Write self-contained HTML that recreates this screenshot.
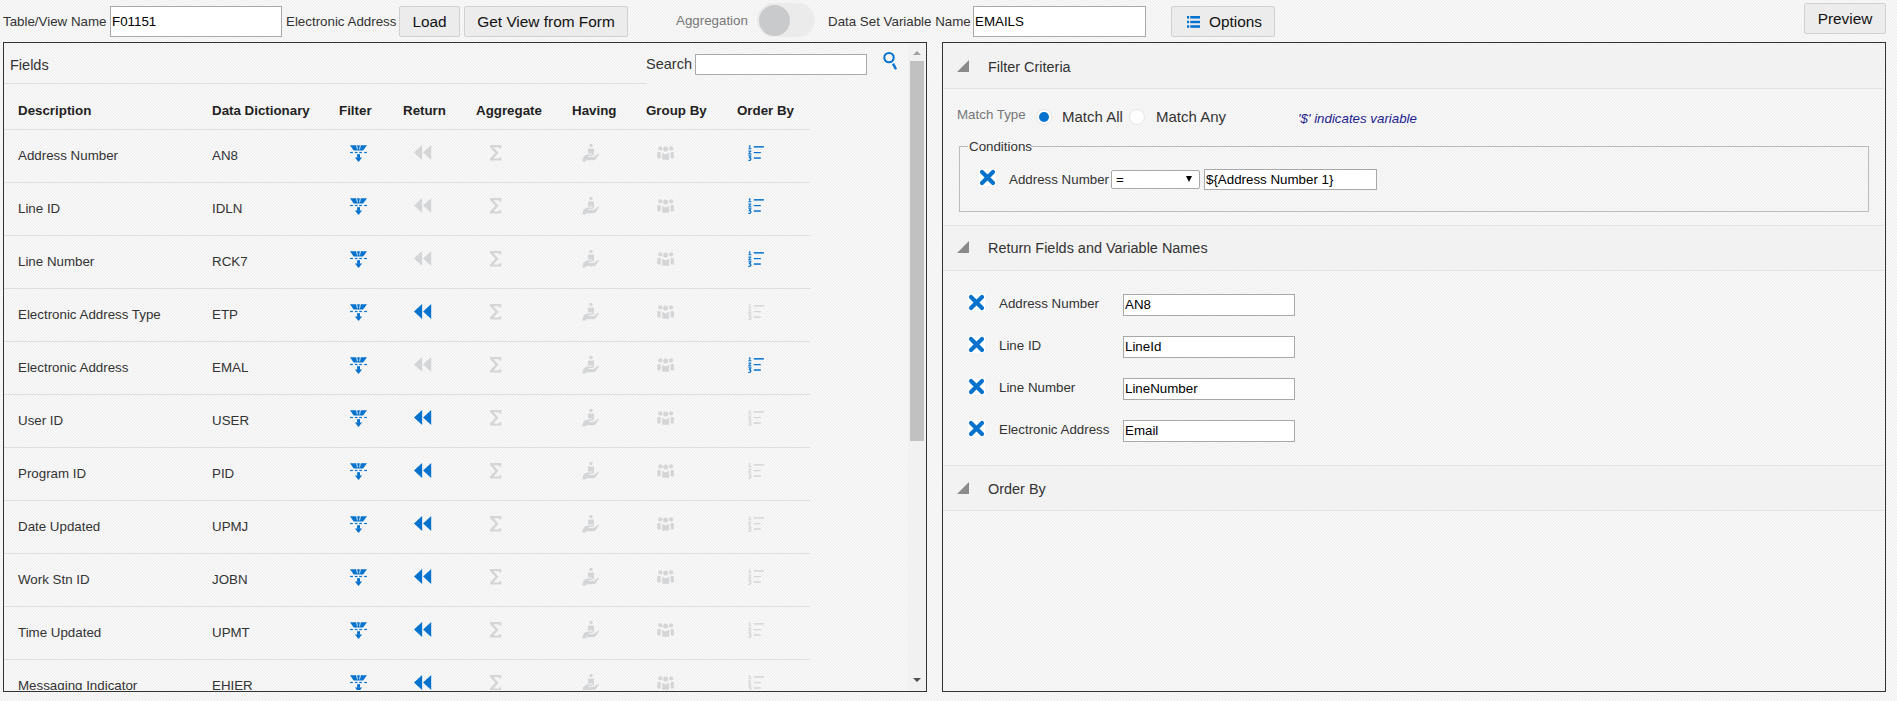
<!DOCTYPE html>
<html><head><meta charset="utf-8">
<style>
*{box-sizing:border-box;margin:0;padding:0}
html,body{width:1897px;height:701px;overflow:hidden}
body{position:relative;font-family:"Liberation Sans",sans-serif;color:#333;
 background:#f4f4f4;
 }
.a{position:absolute;white-space:nowrap}
.t13{font-size:13.33px;line-height:13px}
.t14{font-size:14px;line-height:14px}
.t15{font-size:15px;line-height:15px}
.inp{position:absolute;background:#fff;border:1px solid #a9a9a9}
.btn{position:absolute;background:#ececec;border:1px solid #d0d0d0;border-radius:2px;color:#111;font-size:15.4px;text-align:center}
.panel{position:absolute;border:1px solid #333}
.hline{position:absolute;height:1px;background:#dedede}
.hb{font-weight:bold;color:#222}
.sec{position:absolute;left:943px;width:941px;height:45px;background:#f2f2f2;border-top:1px solid #e3e3e3;border-bottom:1px solid #e3e3e3}
.tri{position:absolute;width:0;height:0;border-left:12px solid transparent;border-bottom:12px solid #8a8a8a}
</style></head><body>
<svg class="a" style="left:0;top:0" width="1897" height="701"><defs><pattern id="hp" width="3" height="3" patternUnits="userSpaceOnUse"><rect width="3" height="3" fill="#f8f8f8"/><rect x="0" y="0" width="1" height="1" fill="#eeeeee"/><rect x="1" y="1" width="1" height="1" fill="#eeeeee"/><rect x="2" y="2" width="1" height="1" fill="#eeeeee"/></pattern></defs><rect width="1897" height="701" fill="url(#hp)"/></svg>

<!-- top bar -->
<div class="a t13" style="left:3px;top:15px">Table/View Name</div>
<div class="inp" style="left:110px;top:6px;width:172px;height:31px"></div>
<div class="a t13" style="left:112px;top:15px;color:#000">F01151</div>
<div class="a t13" style="left:286px;top:15px">Electronic Address</div>
<div class="btn" style="left:399px;top:6px;width:61px;height:31px;line-height:29px">Load</div>
<div class="btn" style="left:464px;top:6px;width:164px;height:31px;line-height:29px">Get View from Form</div>
<div class="a t13" style="left:676px;top:14px;color:#777">Aggregation</div>
<div class="a" style="left:757px;top:3px;width:58px;height:34px;border-radius:17px;background:#ebebeb"></div>
<div class="a" style="left:759px;top:5px;width:31px;height:31px;border-radius:50%;background:#c9cacc"></div>
<div class="a t13" style="left:828px;top:15px">Data Set Variable Name</div>
<div class="inp" style="left:973px;top:6px;width:173px;height:31px"></div>
<div class="a t13" style="left:975px;top:15px;color:#000">EMAILS</div>
<div class="btn" style="left:1171px;top:6px;width:104px;height:31px;line-height:29px;text-align:left;padding-left:37px">Options</div>
<svg class="a" style="left:1187px;top:16px" width="14" height="12" viewBox="0 0 14 12"><g fill="#0572ce"><rect x="0" y="0" width="2.1" height="2.6"/><rect x="3.2" y="0" width="9.8" height="2.6"/><rect x="0" y="4.8" width="2.1" height="2.4"/><rect x="3.2" y="4.8" width="9.8" height="2.4"/><rect x="0" y="9.2" width="2.1" height="2.6"/><rect x="3.2" y="9.2" width="9.8" height="2.6"/></g></svg>
<div class="btn" style="left:1804px;top:3px;width:82px;height:31px;line-height:29px">Preview</div>

<!-- left panel -->
<div class="panel" style="left:3px;top:42px;width:924px;height:650px"></div>
<div class="a t14" style="left:10px;top:58px;font-size:14.5px">Fields</div>
<div class="a t14" style="left:646px;top:57px;font-size:14.5px">Search</div>
<div class="inp" style="left:695px;top:54px;width:172px;height:21px"></div>
<svg class="a" style="left:882px;top:51px" width="18" height="20" viewBox="0 0 18 20"><circle cx="7" cy="6.6" r="4.7" fill="none" stroke="#0572ce" stroke-width="2"/><line x1="11" y1="12.6" x2="14" y2="18.2" stroke="#0572ce" stroke-width="2.4"/></svg>
<div class="hline" style="left:4px;top:83px;width:642px"></div>

<div class="a t13 hb" style="left:18px;top:104px">Description</div>
<div class="a t13 hb" style="left:212px;top:104px">Data Dictionary</div>
<div class="a t13 hb" style="left:339px;top:104px">Filter</div>
<div class="a t13 hb" style="left:403px;top:104px">Return</div>
<div class="a t13 hb" style="left:476px;top:104px">Aggregate</div>
<div class="a t13 hb" style="left:572px;top:104px">Having</div>
<div class="a t13 hb" style="left:646px;top:104px">Group By</div>
<div class="a t13 hb" style="left:737px;top:104px">Order By</div>
<div class="a" style="left:4px;top:43px;width:904px;height:647px;overflow:hidden">
<div class="hline" style="left:0px;top:86px;width:806px"></div>
<div class="a t13" style="left:14px;top:106px">Address Number</div>
<div class="a t13" style="left:208px;top:106px">AN8</div>
<svg class="a" style="left:346px;top:102px" width="17" height="17" viewBox="0 0 17 17"><g fill="#0572ce"><path d="M0 0.2H17L13.1 5.6H3.7Z"/><path d="M6.6 0L7.4 4.4M10.4 0L9.6 4.4" stroke="#f4f4f4" stroke-width="0.9"/><rect x="0.1" y="6.9" width="2.8" height="1.2"/><rect x="4.9" y="6.9" width="2.6" height="1.2"/><rect x="9.2" y="6.9" width="2.7" height="1.2"/><rect x="14.2" y="6.9" width="2.7" height="1.2"/><rect x="7.1" y="9.2" width="2.9" height="3.6"/><path d="M4.9 12.4H12.1L8.5 17Z"/></g></svg>
<svg class="a" style="left:410px;top:102px" width="18" height="15" viewBox="0 0 18 15"><g fill="#d4d5d7"><path d="M0 7.4L8.1 0V14.9Z"/><path d="M9.1 7.4L17.2 0V14.9Z"/></g></svg>
<svg class="a" style="left:485.5px;top:102px" width="12" height="16" viewBox="0 0 12 16"><g fill="#d4d5d7"><path d="M0 0H11.3V3.4H9.2V2.2H3.4L8.5 7.8L3.4 13.4H9.2V12.2H11.3V15.6H0V13.6L5.4 7.8L0 2Z"/></g></svg>
<svg class="a" style="left:578px;top:101px" width="18" height="18" viewBox="0 0 18 18"><g fill="#d4d5d7"><circle cx="9" cy="1.6" r="1.7"/><path d="M6 4.4H8.5L9 5.2L9.5 4.4H12V11.6H10.5V9.6H7.5V9.4H6Z"/><path d="M0.3 17.6L1.2 13.6Q2.6 10.6 6 10.4H10.6V12.1H6.6V12.9H11.8L16.4 9.6L17 10.2L13.8 15Q12.8 16.2 11 16.2H4.3L3.4 17.6Z"/></g></svg>
<svg class="a" style="left:653px;top:103px" width="17" height="14" viewBox="0 0 17 14"><g fill="#d4d5d7"><circle cx="3.3" cy="2.4" r="2.1"/><circle cx="8.6" cy="2.9" r="2.5"/><circle cx="14.1" cy="2.4" r="2.1"/><rect x="0.3" y="6" width="3.4" height="6.5" rx="1"/><path d="M5.2 6.8L8.65 8.6L12.1 6.8V13.7H5.2Z"/><rect x="13.6" y="6" width="3.3" height="6.5" rx="1"/></g></svg>
<svg class="a" style="left:744px;top:102px" width="16" height="16" viewBox="0 0 16 16"><g fill="#0572ce"><path d="M1.2 0.3H2.4V3.2H3.4V4.3H0.4V3.2H1.3V1.4L0.6 1.8Z"/><path d="M0.4 5.6H3.2V6.8L1.6 8.3H3.4V9.4H0.3V8.2L2 6.7H0.4Z"/><path d="M0.4 10.2H3.4V11.2L2.4 12.3Q3.5 12.6 3.5 14Q3.4 15.9 1.6 15.9H0.3V14.8H1.6Q2.2 14.8 2.2 14Q2.2 13.2 1.4 13.2H0.8V12.2L1.7 11.3H0.4Z"/><rect x="5.8" y="1.1" width="10.1" height="1.5"/><rect x="5.8" y="7" width="7" height="1.2"/><rect x="5.8" y="12.3" width="7" height="1.5"/></g></svg>
<div class="hline" style="left:0px;top:139px;width:806px"></div>
<div class="a t13" style="left:14px;top:159px">Line ID</div>
<div class="a t13" style="left:208px;top:159px">IDLN</div>
<svg class="a" style="left:346px;top:155px" width="17" height="17" viewBox="0 0 17 17"><g fill="#0572ce"><path d="M0 0.2H17L13.1 5.6H3.7Z"/><path d="M6.6 0L7.4 4.4M10.4 0L9.6 4.4" stroke="#f4f4f4" stroke-width="0.9"/><rect x="0.1" y="6.9" width="2.8" height="1.2"/><rect x="4.9" y="6.9" width="2.6" height="1.2"/><rect x="9.2" y="6.9" width="2.7" height="1.2"/><rect x="14.2" y="6.9" width="2.7" height="1.2"/><rect x="7.1" y="9.2" width="2.9" height="3.6"/><path d="M4.9 12.4H12.1L8.5 17Z"/></g></svg>
<svg class="a" style="left:410px;top:155px" width="18" height="15" viewBox="0 0 18 15"><g fill="#d4d5d7"><path d="M0 7.4L8.1 0V14.9Z"/><path d="M9.1 7.4L17.2 0V14.9Z"/></g></svg>
<svg class="a" style="left:485.5px;top:155px" width="12" height="16" viewBox="0 0 12 16"><g fill="#d4d5d7"><path d="M0 0H11.3V3.4H9.2V2.2H3.4L8.5 7.8L3.4 13.4H9.2V12.2H11.3V15.6H0V13.6L5.4 7.8L0 2Z"/></g></svg>
<svg class="a" style="left:578px;top:154px" width="18" height="18" viewBox="0 0 18 18"><g fill="#d4d5d7"><circle cx="9" cy="1.6" r="1.7"/><path d="M6 4.4H8.5L9 5.2L9.5 4.4H12V11.6H10.5V9.6H7.5V9.4H6Z"/><path d="M0.3 17.6L1.2 13.6Q2.6 10.6 6 10.4H10.6V12.1H6.6V12.9H11.8L16.4 9.6L17 10.2L13.8 15Q12.8 16.2 11 16.2H4.3L3.4 17.6Z"/></g></svg>
<svg class="a" style="left:653px;top:156px" width="17" height="14" viewBox="0 0 17 14"><g fill="#d4d5d7"><circle cx="3.3" cy="2.4" r="2.1"/><circle cx="8.6" cy="2.9" r="2.5"/><circle cx="14.1" cy="2.4" r="2.1"/><rect x="0.3" y="6" width="3.4" height="6.5" rx="1"/><path d="M5.2 6.8L8.65 8.6L12.1 6.8V13.7H5.2Z"/><rect x="13.6" y="6" width="3.3" height="6.5" rx="1"/></g></svg>
<svg class="a" style="left:744px;top:155px" width="16" height="16" viewBox="0 0 16 16"><g fill="#0572ce"><path d="M1.2 0.3H2.4V3.2H3.4V4.3H0.4V3.2H1.3V1.4L0.6 1.8Z"/><path d="M0.4 5.6H3.2V6.8L1.6 8.3H3.4V9.4H0.3V8.2L2 6.7H0.4Z"/><path d="M0.4 10.2H3.4V11.2L2.4 12.3Q3.5 12.6 3.5 14Q3.4 15.9 1.6 15.9H0.3V14.8H1.6Q2.2 14.8 2.2 14Q2.2 13.2 1.4 13.2H0.8V12.2L1.7 11.3H0.4Z"/><rect x="5.8" y="1.1" width="10.1" height="1.5"/><rect x="5.8" y="7" width="7" height="1.2"/><rect x="5.8" y="12.3" width="7" height="1.5"/></g></svg>
<div class="hline" style="left:0px;top:192px;width:806px"></div>
<div class="a t13" style="left:14px;top:212px">Line Number</div>
<div class="a t13" style="left:208px;top:212px">RCK7</div>
<svg class="a" style="left:346px;top:208px" width="17" height="17" viewBox="0 0 17 17"><g fill="#0572ce"><path d="M0 0.2H17L13.1 5.6H3.7Z"/><path d="M6.6 0L7.4 4.4M10.4 0L9.6 4.4" stroke="#f4f4f4" stroke-width="0.9"/><rect x="0.1" y="6.9" width="2.8" height="1.2"/><rect x="4.9" y="6.9" width="2.6" height="1.2"/><rect x="9.2" y="6.9" width="2.7" height="1.2"/><rect x="14.2" y="6.9" width="2.7" height="1.2"/><rect x="7.1" y="9.2" width="2.9" height="3.6"/><path d="M4.9 12.4H12.1L8.5 17Z"/></g></svg>
<svg class="a" style="left:410px;top:208px" width="18" height="15" viewBox="0 0 18 15"><g fill="#d4d5d7"><path d="M0 7.4L8.1 0V14.9Z"/><path d="M9.1 7.4L17.2 0V14.9Z"/></g></svg>
<svg class="a" style="left:485.5px;top:208px" width="12" height="16" viewBox="0 0 12 16"><g fill="#d4d5d7"><path d="M0 0H11.3V3.4H9.2V2.2H3.4L8.5 7.8L3.4 13.4H9.2V12.2H11.3V15.6H0V13.6L5.4 7.8L0 2Z"/></g></svg>
<svg class="a" style="left:578px;top:207px" width="18" height="18" viewBox="0 0 18 18"><g fill="#d4d5d7"><circle cx="9" cy="1.6" r="1.7"/><path d="M6 4.4H8.5L9 5.2L9.5 4.4H12V11.6H10.5V9.6H7.5V9.4H6Z"/><path d="M0.3 17.6L1.2 13.6Q2.6 10.6 6 10.4H10.6V12.1H6.6V12.9H11.8L16.4 9.6L17 10.2L13.8 15Q12.8 16.2 11 16.2H4.3L3.4 17.6Z"/></g></svg>
<svg class="a" style="left:653px;top:209px" width="17" height="14" viewBox="0 0 17 14"><g fill="#d4d5d7"><circle cx="3.3" cy="2.4" r="2.1"/><circle cx="8.6" cy="2.9" r="2.5"/><circle cx="14.1" cy="2.4" r="2.1"/><rect x="0.3" y="6" width="3.4" height="6.5" rx="1"/><path d="M5.2 6.8L8.65 8.6L12.1 6.8V13.7H5.2Z"/><rect x="13.6" y="6" width="3.3" height="6.5" rx="1"/></g></svg>
<svg class="a" style="left:744px;top:208px" width="16" height="16" viewBox="0 0 16 16"><g fill="#0572ce"><path d="M1.2 0.3H2.4V3.2H3.4V4.3H0.4V3.2H1.3V1.4L0.6 1.8Z"/><path d="M0.4 5.6H3.2V6.8L1.6 8.3H3.4V9.4H0.3V8.2L2 6.7H0.4Z"/><path d="M0.4 10.2H3.4V11.2L2.4 12.3Q3.5 12.6 3.5 14Q3.4 15.9 1.6 15.9H0.3V14.8H1.6Q2.2 14.8 2.2 14Q2.2 13.2 1.4 13.2H0.8V12.2L1.7 11.3H0.4Z"/><rect x="5.8" y="1.1" width="10.1" height="1.5"/><rect x="5.8" y="7" width="7" height="1.2"/><rect x="5.8" y="12.3" width="7" height="1.5"/></g></svg>
<div class="hline" style="left:0px;top:245px;width:806px"></div>
<div class="a t13" style="left:14px;top:265px">Electronic Address Type</div>
<div class="a t13" style="left:208px;top:265px">ETP</div>
<svg class="a" style="left:346px;top:261px" width="17" height="17" viewBox="0 0 17 17"><g fill="#0572ce"><path d="M0 0.2H17L13.1 5.6H3.7Z"/><path d="M6.6 0L7.4 4.4M10.4 0L9.6 4.4" stroke="#f4f4f4" stroke-width="0.9"/><rect x="0.1" y="6.9" width="2.8" height="1.2"/><rect x="4.9" y="6.9" width="2.6" height="1.2"/><rect x="9.2" y="6.9" width="2.7" height="1.2"/><rect x="14.2" y="6.9" width="2.7" height="1.2"/><rect x="7.1" y="9.2" width="2.9" height="3.6"/><path d="M4.9 12.4H12.1L8.5 17Z"/></g></svg>
<svg class="a" style="left:410px;top:261px" width="18" height="15" viewBox="0 0 18 15"><g fill="#0572ce"><path d="M0 7.4L8.1 0V14.9Z"/><path d="M9.1 7.4L17.2 0V14.9Z"/></g></svg>
<svg class="a" style="left:485.5px;top:261px" width="12" height="16" viewBox="0 0 12 16"><g fill="#d4d5d7"><path d="M0 0H11.3V3.4H9.2V2.2H3.4L8.5 7.8L3.4 13.4H9.2V12.2H11.3V15.6H0V13.6L5.4 7.8L0 2Z"/></g></svg>
<svg class="a" style="left:578px;top:260px" width="18" height="18" viewBox="0 0 18 18"><g fill="#d4d5d7"><circle cx="9" cy="1.6" r="1.7"/><path d="M6 4.4H8.5L9 5.2L9.5 4.4H12V11.6H10.5V9.6H7.5V9.4H6Z"/><path d="M0.3 17.6L1.2 13.6Q2.6 10.6 6 10.4H10.6V12.1H6.6V12.9H11.8L16.4 9.6L17 10.2L13.8 15Q12.8 16.2 11 16.2H4.3L3.4 17.6Z"/></g></svg>
<svg class="a" style="left:653px;top:262px" width="17" height="14" viewBox="0 0 17 14"><g fill="#d4d5d7"><circle cx="3.3" cy="2.4" r="2.1"/><circle cx="8.6" cy="2.9" r="2.5"/><circle cx="14.1" cy="2.4" r="2.1"/><rect x="0.3" y="6" width="3.4" height="6.5" rx="1"/><path d="M5.2 6.8L8.65 8.6L12.1 6.8V13.7H5.2Z"/><rect x="13.6" y="6" width="3.3" height="6.5" rx="1"/></g></svg>
<svg class="a" style="left:744px;top:261px" width="16" height="16" viewBox="0 0 16 16"><g fill="#d4d5d7"><path d="M1.2 0.3H2.4V3.2H3.4V4.3H0.4V3.2H1.3V1.4L0.6 1.8Z"/><path d="M0.4 5.6H3.2V6.8L1.6 8.3H3.4V9.4H0.3V8.2L2 6.7H0.4Z"/><path d="M0.4 10.2H3.4V11.2L2.4 12.3Q3.5 12.6 3.5 14Q3.4 15.9 1.6 15.9H0.3V14.8H1.6Q2.2 14.8 2.2 14Q2.2 13.2 1.4 13.2H0.8V12.2L1.7 11.3H0.4Z"/><rect x="5.8" y="1.1" width="10.1" height="1.5"/><rect x="5.8" y="7" width="7" height="1.2"/><rect x="5.8" y="12.3" width="7" height="1.5"/></g></svg>
<div class="hline" style="left:0px;top:298px;width:806px"></div>
<div class="a t13" style="left:14px;top:318px">Electronic Address</div>
<div class="a t13" style="left:208px;top:318px">EMAL</div>
<svg class="a" style="left:346px;top:314px" width="17" height="17" viewBox="0 0 17 17"><g fill="#0572ce"><path d="M0 0.2H17L13.1 5.6H3.7Z"/><path d="M6.6 0L7.4 4.4M10.4 0L9.6 4.4" stroke="#f4f4f4" stroke-width="0.9"/><rect x="0.1" y="6.9" width="2.8" height="1.2"/><rect x="4.9" y="6.9" width="2.6" height="1.2"/><rect x="9.2" y="6.9" width="2.7" height="1.2"/><rect x="14.2" y="6.9" width="2.7" height="1.2"/><rect x="7.1" y="9.2" width="2.9" height="3.6"/><path d="M4.9 12.4H12.1L8.5 17Z"/></g></svg>
<svg class="a" style="left:410px;top:314px" width="18" height="15" viewBox="0 0 18 15"><g fill="#d4d5d7"><path d="M0 7.4L8.1 0V14.9Z"/><path d="M9.1 7.4L17.2 0V14.9Z"/></g></svg>
<svg class="a" style="left:485.5px;top:314px" width="12" height="16" viewBox="0 0 12 16"><g fill="#d4d5d7"><path d="M0 0H11.3V3.4H9.2V2.2H3.4L8.5 7.8L3.4 13.4H9.2V12.2H11.3V15.6H0V13.6L5.4 7.8L0 2Z"/></g></svg>
<svg class="a" style="left:578px;top:313px" width="18" height="18" viewBox="0 0 18 18"><g fill="#d4d5d7"><circle cx="9" cy="1.6" r="1.7"/><path d="M6 4.4H8.5L9 5.2L9.5 4.4H12V11.6H10.5V9.6H7.5V9.4H6Z"/><path d="M0.3 17.6L1.2 13.6Q2.6 10.6 6 10.4H10.6V12.1H6.6V12.9H11.8L16.4 9.6L17 10.2L13.8 15Q12.8 16.2 11 16.2H4.3L3.4 17.6Z"/></g></svg>
<svg class="a" style="left:653px;top:315px" width="17" height="14" viewBox="0 0 17 14"><g fill="#d4d5d7"><circle cx="3.3" cy="2.4" r="2.1"/><circle cx="8.6" cy="2.9" r="2.5"/><circle cx="14.1" cy="2.4" r="2.1"/><rect x="0.3" y="6" width="3.4" height="6.5" rx="1"/><path d="M5.2 6.8L8.65 8.6L12.1 6.8V13.7H5.2Z"/><rect x="13.6" y="6" width="3.3" height="6.5" rx="1"/></g></svg>
<svg class="a" style="left:744px;top:314px" width="16" height="16" viewBox="0 0 16 16"><g fill="#0572ce"><path d="M1.2 0.3H2.4V3.2H3.4V4.3H0.4V3.2H1.3V1.4L0.6 1.8Z"/><path d="M0.4 5.6H3.2V6.8L1.6 8.3H3.4V9.4H0.3V8.2L2 6.7H0.4Z"/><path d="M0.4 10.2H3.4V11.2L2.4 12.3Q3.5 12.6 3.5 14Q3.4 15.9 1.6 15.9H0.3V14.8H1.6Q2.2 14.8 2.2 14Q2.2 13.2 1.4 13.2H0.8V12.2L1.7 11.3H0.4Z"/><rect x="5.8" y="1.1" width="10.1" height="1.5"/><rect x="5.8" y="7" width="7" height="1.2"/><rect x="5.8" y="12.3" width="7" height="1.5"/></g></svg>
<div class="hline" style="left:0px;top:351px;width:806px"></div>
<div class="a t13" style="left:14px;top:371px">User ID</div>
<div class="a t13" style="left:208px;top:371px">USER</div>
<svg class="a" style="left:346px;top:367px" width="17" height="17" viewBox="0 0 17 17"><g fill="#0572ce"><path d="M0 0.2H17L13.1 5.6H3.7Z"/><path d="M6.6 0L7.4 4.4M10.4 0L9.6 4.4" stroke="#f4f4f4" stroke-width="0.9"/><rect x="0.1" y="6.9" width="2.8" height="1.2"/><rect x="4.9" y="6.9" width="2.6" height="1.2"/><rect x="9.2" y="6.9" width="2.7" height="1.2"/><rect x="14.2" y="6.9" width="2.7" height="1.2"/><rect x="7.1" y="9.2" width="2.9" height="3.6"/><path d="M4.9 12.4H12.1L8.5 17Z"/></g></svg>
<svg class="a" style="left:410px;top:367px" width="18" height="15" viewBox="0 0 18 15"><g fill="#0572ce"><path d="M0 7.4L8.1 0V14.9Z"/><path d="M9.1 7.4L17.2 0V14.9Z"/></g></svg>
<svg class="a" style="left:485.5px;top:367px" width="12" height="16" viewBox="0 0 12 16"><g fill="#d4d5d7"><path d="M0 0H11.3V3.4H9.2V2.2H3.4L8.5 7.8L3.4 13.4H9.2V12.2H11.3V15.6H0V13.6L5.4 7.8L0 2Z"/></g></svg>
<svg class="a" style="left:578px;top:366px" width="18" height="18" viewBox="0 0 18 18"><g fill="#d4d5d7"><circle cx="9" cy="1.6" r="1.7"/><path d="M6 4.4H8.5L9 5.2L9.5 4.4H12V11.6H10.5V9.6H7.5V9.4H6Z"/><path d="M0.3 17.6L1.2 13.6Q2.6 10.6 6 10.4H10.6V12.1H6.6V12.9H11.8L16.4 9.6L17 10.2L13.8 15Q12.8 16.2 11 16.2H4.3L3.4 17.6Z"/></g></svg>
<svg class="a" style="left:653px;top:368px" width="17" height="14" viewBox="0 0 17 14"><g fill="#d4d5d7"><circle cx="3.3" cy="2.4" r="2.1"/><circle cx="8.6" cy="2.9" r="2.5"/><circle cx="14.1" cy="2.4" r="2.1"/><rect x="0.3" y="6" width="3.4" height="6.5" rx="1"/><path d="M5.2 6.8L8.65 8.6L12.1 6.8V13.7H5.2Z"/><rect x="13.6" y="6" width="3.3" height="6.5" rx="1"/></g></svg>
<svg class="a" style="left:744px;top:367px" width="16" height="16" viewBox="0 0 16 16"><g fill="#d4d5d7"><path d="M1.2 0.3H2.4V3.2H3.4V4.3H0.4V3.2H1.3V1.4L0.6 1.8Z"/><path d="M0.4 5.6H3.2V6.8L1.6 8.3H3.4V9.4H0.3V8.2L2 6.7H0.4Z"/><path d="M0.4 10.2H3.4V11.2L2.4 12.3Q3.5 12.6 3.5 14Q3.4 15.9 1.6 15.9H0.3V14.8H1.6Q2.2 14.8 2.2 14Q2.2 13.2 1.4 13.2H0.8V12.2L1.7 11.3H0.4Z"/><rect x="5.8" y="1.1" width="10.1" height="1.5"/><rect x="5.8" y="7" width="7" height="1.2"/><rect x="5.8" y="12.3" width="7" height="1.5"/></g></svg>
<div class="hline" style="left:0px;top:404px;width:806px"></div>
<div class="a t13" style="left:14px;top:424px">Program ID</div>
<div class="a t13" style="left:208px;top:424px">PID</div>
<svg class="a" style="left:346px;top:420px" width="17" height="17" viewBox="0 0 17 17"><g fill="#0572ce"><path d="M0 0.2H17L13.1 5.6H3.7Z"/><path d="M6.6 0L7.4 4.4M10.4 0L9.6 4.4" stroke="#f4f4f4" stroke-width="0.9"/><rect x="0.1" y="6.9" width="2.8" height="1.2"/><rect x="4.9" y="6.9" width="2.6" height="1.2"/><rect x="9.2" y="6.9" width="2.7" height="1.2"/><rect x="14.2" y="6.9" width="2.7" height="1.2"/><rect x="7.1" y="9.2" width="2.9" height="3.6"/><path d="M4.9 12.4H12.1L8.5 17Z"/></g></svg>
<svg class="a" style="left:410px;top:420px" width="18" height="15" viewBox="0 0 18 15"><g fill="#0572ce"><path d="M0 7.4L8.1 0V14.9Z"/><path d="M9.1 7.4L17.2 0V14.9Z"/></g></svg>
<svg class="a" style="left:485.5px;top:420px" width="12" height="16" viewBox="0 0 12 16"><g fill="#d4d5d7"><path d="M0 0H11.3V3.4H9.2V2.2H3.4L8.5 7.8L3.4 13.4H9.2V12.2H11.3V15.6H0V13.6L5.4 7.8L0 2Z"/></g></svg>
<svg class="a" style="left:578px;top:419px" width="18" height="18" viewBox="0 0 18 18"><g fill="#d4d5d7"><circle cx="9" cy="1.6" r="1.7"/><path d="M6 4.4H8.5L9 5.2L9.5 4.4H12V11.6H10.5V9.6H7.5V9.4H6Z"/><path d="M0.3 17.6L1.2 13.6Q2.6 10.6 6 10.4H10.6V12.1H6.6V12.9H11.8L16.4 9.6L17 10.2L13.8 15Q12.8 16.2 11 16.2H4.3L3.4 17.6Z"/></g></svg>
<svg class="a" style="left:653px;top:421px" width="17" height="14" viewBox="0 0 17 14"><g fill="#d4d5d7"><circle cx="3.3" cy="2.4" r="2.1"/><circle cx="8.6" cy="2.9" r="2.5"/><circle cx="14.1" cy="2.4" r="2.1"/><rect x="0.3" y="6" width="3.4" height="6.5" rx="1"/><path d="M5.2 6.8L8.65 8.6L12.1 6.8V13.7H5.2Z"/><rect x="13.6" y="6" width="3.3" height="6.5" rx="1"/></g></svg>
<svg class="a" style="left:744px;top:420px" width="16" height="16" viewBox="0 0 16 16"><g fill="#d4d5d7"><path d="M1.2 0.3H2.4V3.2H3.4V4.3H0.4V3.2H1.3V1.4L0.6 1.8Z"/><path d="M0.4 5.6H3.2V6.8L1.6 8.3H3.4V9.4H0.3V8.2L2 6.7H0.4Z"/><path d="M0.4 10.2H3.4V11.2L2.4 12.3Q3.5 12.6 3.5 14Q3.4 15.9 1.6 15.9H0.3V14.8H1.6Q2.2 14.8 2.2 14Q2.2 13.2 1.4 13.2H0.8V12.2L1.7 11.3H0.4Z"/><rect x="5.8" y="1.1" width="10.1" height="1.5"/><rect x="5.8" y="7" width="7" height="1.2"/><rect x="5.8" y="12.3" width="7" height="1.5"/></g></svg>
<div class="hline" style="left:0px;top:457px;width:806px"></div>
<div class="a t13" style="left:14px;top:477px">Date Updated</div>
<div class="a t13" style="left:208px;top:477px">UPMJ</div>
<svg class="a" style="left:346px;top:473px" width="17" height="17" viewBox="0 0 17 17"><g fill="#0572ce"><path d="M0 0.2H17L13.1 5.6H3.7Z"/><path d="M6.6 0L7.4 4.4M10.4 0L9.6 4.4" stroke="#f4f4f4" stroke-width="0.9"/><rect x="0.1" y="6.9" width="2.8" height="1.2"/><rect x="4.9" y="6.9" width="2.6" height="1.2"/><rect x="9.2" y="6.9" width="2.7" height="1.2"/><rect x="14.2" y="6.9" width="2.7" height="1.2"/><rect x="7.1" y="9.2" width="2.9" height="3.6"/><path d="M4.9 12.4H12.1L8.5 17Z"/></g></svg>
<svg class="a" style="left:410px;top:473px" width="18" height="15" viewBox="0 0 18 15"><g fill="#0572ce"><path d="M0 7.4L8.1 0V14.9Z"/><path d="M9.1 7.4L17.2 0V14.9Z"/></g></svg>
<svg class="a" style="left:485.5px;top:473px" width="12" height="16" viewBox="0 0 12 16"><g fill="#d4d5d7"><path d="M0 0H11.3V3.4H9.2V2.2H3.4L8.5 7.8L3.4 13.4H9.2V12.2H11.3V15.6H0V13.6L5.4 7.8L0 2Z"/></g></svg>
<svg class="a" style="left:578px;top:472px" width="18" height="18" viewBox="0 0 18 18"><g fill="#d4d5d7"><circle cx="9" cy="1.6" r="1.7"/><path d="M6 4.4H8.5L9 5.2L9.5 4.4H12V11.6H10.5V9.6H7.5V9.4H6Z"/><path d="M0.3 17.6L1.2 13.6Q2.6 10.6 6 10.4H10.6V12.1H6.6V12.9H11.8L16.4 9.6L17 10.2L13.8 15Q12.8 16.2 11 16.2H4.3L3.4 17.6Z"/></g></svg>
<svg class="a" style="left:653px;top:474px" width="17" height="14" viewBox="0 0 17 14"><g fill="#d4d5d7"><circle cx="3.3" cy="2.4" r="2.1"/><circle cx="8.6" cy="2.9" r="2.5"/><circle cx="14.1" cy="2.4" r="2.1"/><rect x="0.3" y="6" width="3.4" height="6.5" rx="1"/><path d="M5.2 6.8L8.65 8.6L12.1 6.8V13.7H5.2Z"/><rect x="13.6" y="6" width="3.3" height="6.5" rx="1"/></g></svg>
<svg class="a" style="left:744px;top:473px" width="16" height="16" viewBox="0 0 16 16"><g fill="#d4d5d7"><path d="M1.2 0.3H2.4V3.2H3.4V4.3H0.4V3.2H1.3V1.4L0.6 1.8Z"/><path d="M0.4 5.6H3.2V6.8L1.6 8.3H3.4V9.4H0.3V8.2L2 6.7H0.4Z"/><path d="M0.4 10.2H3.4V11.2L2.4 12.3Q3.5 12.6 3.5 14Q3.4 15.9 1.6 15.9H0.3V14.8H1.6Q2.2 14.8 2.2 14Q2.2 13.2 1.4 13.2H0.8V12.2L1.7 11.3H0.4Z"/><rect x="5.8" y="1.1" width="10.1" height="1.5"/><rect x="5.8" y="7" width="7" height="1.2"/><rect x="5.8" y="12.3" width="7" height="1.5"/></g></svg>
<div class="hline" style="left:0px;top:510px;width:806px"></div>
<div class="a t13" style="left:14px;top:530px">Work Stn ID</div>
<div class="a t13" style="left:208px;top:530px">JOBN</div>
<svg class="a" style="left:346px;top:526px" width="17" height="17" viewBox="0 0 17 17"><g fill="#0572ce"><path d="M0 0.2H17L13.1 5.6H3.7Z"/><path d="M6.6 0L7.4 4.4M10.4 0L9.6 4.4" stroke="#f4f4f4" stroke-width="0.9"/><rect x="0.1" y="6.9" width="2.8" height="1.2"/><rect x="4.9" y="6.9" width="2.6" height="1.2"/><rect x="9.2" y="6.9" width="2.7" height="1.2"/><rect x="14.2" y="6.9" width="2.7" height="1.2"/><rect x="7.1" y="9.2" width="2.9" height="3.6"/><path d="M4.9 12.4H12.1L8.5 17Z"/></g></svg>
<svg class="a" style="left:410px;top:526px" width="18" height="15" viewBox="0 0 18 15"><g fill="#0572ce"><path d="M0 7.4L8.1 0V14.9Z"/><path d="M9.1 7.4L17.2 0V14.9Z"/></g></svg>
<svg class="a" style="left:485.5px;top:526px" width="12" height="16" viewBox="0 0 12 16"><g fill="#d4d5d7"><path d="M0 0H11.3V3.4H9.2V2.2H3.4L8.5 7.8L3.4 13.4H9.2V12.2H11.3V15.6H0V13.6L5.4 7.8L0 2Z"/></g></svg>
<svg class="a" style="left:578px;top:525px" width="18" height="18" viewBox="0 0 18 18"><g fill="#d4d5d7"><circle cx="9" cy="1.6" r="1.7"/><path d="M6 4.4H8.5L9 5.2L9.5 4.4H12V11.6H10.5V9.6H7.5V9.4H6Z"/><path d="M0.3 17.6L1.2 13.6Q2.6 10.6 6 10.4H10.6V12.1H6.6V12.9H11.8L16.4 9.6L17 10.2L13.8 15Q12.8 16.2 11 16.2H4.3L3.4 17.6Z"/></g></svg>
<svg class="a" style="left:653px;top:527px" width="17" height="14" viewBox="0 0 17 14"><g fill="#d4d5d7"><circle cx="3.3" cy="2.4" r="2.1"/><circle cx="8.6" cy="2.9" r="2.5"/><circle cx="14.1" cy="2.4" r="2.1"/><rect x="0.3" y="6" width="3.4" height="6.5" rx="1"/><path d="M5.2 6.8L8.65 8.6L12.1 6.8V13.7H5.2Z"/><rect x="13.6" y="6" width="3.3" height="6.5" rx="1"/></g></svg>
<svg class="a" style="left:744px;top:526px" width="16" height="16" viewBox="0 0 16 16"><g fill="#d4d5d7"><path d="M1.2 0.3H2.4V3.2H3.4V4.3H0.4V3.2H1.3V1.4L0.6 1.8Z"/><path d="M0.4 5.6H3.2V6.8L1.6 8.3H3.4V9.4H0.3V8.2L2 6.7H0.4Z"/><path d="M0.4 10.2H3.4V11.2L2.4 12.3Q3.5 12.6 3.5 14Q3.4 15.9 1.6 15.9H0.3V14.8H1.6Q2.2 14.8 2.2 14Q2.2 13.2 1.4 13.2H0.8V12.2L1.7 11.3H0.4Z"/><rect x="5.8" y="1.1" width="10.1" height="1.5"/><rect x="5.8" y="7" width="7" height="1.2"/><rect x="5.8" y="12.3" width="7" height="1.5"/></g></svg>
<div class="hline" style="left:0px;top:563px;width:806px"></div>
<div class="a t13" style="left:14px;top:583px">Time Updated</div>
<div class="a t13" style="left:208px;top:583px">UPMT</div>
<svg class="a" style="left:346px;top:579px" width="17" height="17" viewBox="0 0 17 17"><g fill="#0572ce"><path d="M0 0.2H17L13.1 5.6H3.7Z"/><path d="M6.6 0L7.4 4.4M10.4 0L9.6 4.4" stroke="#f4f4f4" stroke-width="0.9"/><rect x="0.1" y="6.9" width="2.8" height="1.2"/><rect x="4.9" y="6.9" width="2.6" height="1.2"/><rect x="9.2" y="6.9" width="2.7" height="1.2"/><rect x="14.2" y="6.9" width="2.7" height="1.2"/><rect x="7.1" y="9.2" width="2.9" height="3.6"/><path d="M4.9 12.4H12.1L8.5 17Z"/></g></svg>
<svg class="a" style="left:410px;top:579px" width="18" height="15" viewBox="0 0 18 15"><g fill="#0572ce"><path d="M0 7.4L8.1 0V14.9Z"/><path d="M9.1 7.4L17.2 0V14.9Z"/></g></svg>
<svg class="a" style="left:485.5px;top:579px" width="12" height="16" viewBox="0 0 12 16"><g fill="#d4d5d7"><path d="M0 0H11.3V3.4H9.2V2.2H3.4L8.5 7.8L3.4 13.4H9.2V12.2H11.3V15.6H0V13.6L5.4 7.8L0 2Z"/></g></svg>
<svg class="a" style="left:578px;top:578px" width="18" height="18" viewBox="0 0 18 18"><g fill="#d4d5d7"><circle cx="9" cy="1.6" r="1.7"/><path d="M6 4.4H8.5L9 5.2L9.5 4.4H12V11.6H10.5V9.6H7.5V9.4H6Z"/><path d="M0.3 17.6L1.2 13.6Q2.6 10.6 6 10.4H10.6V12.1H6.6V12.9H11.8L16.4 9.6L17 10.2L13.8 15Q12.8 16.2 11 16.2H4.3L3.4 17.6Z"/></g></svg>
<svg class="a" style="left:653px;top:580px" width="17" height="14" viewBox="0 0 17 14"><g fill="#d4d5d7"><circle cx="3.3" cy="2.4" r="2.1"/><circle cx="8.6" cy="2.9" r="2.5"/><circle cx="14.1" cy="2.4" r="2.1"/><rect x="0.3" y="6" width="3.4" height="6.5" rx="1"/><path d="M5.2 6.8L8.65 8.6L12.1 6.8V13.7H5.2Z"/><rect x="13.6" y="6" width="3.3" height="6.5" rx="1"/></g></svg>
<svg class="a" style="left:744px;top:579px" width="16" height="16" viewBox="0 0 16 16"><g fill="#d4d5d7"><path d="M1.2 0.3H2.4V3.2H3.4V4.3H0.4V3.2H1.3V1.4L0.6 1.8Z"/><path d="M0.4 5.6H3.2V6.8L1.6 8.3H3.4V9.4H0.3V8.2L2 6.7H0.4Z"/><path d="M0.4 10.2H3.4V11.2L2.4 12.3Q3.5 12.6 3.5 14Q3.4 15.9 1.6 15.9H0.3V14.8H1.6Q2.2 14.8 2.2 14Q2.2 13.2 1.4 13.2H0.8V12.2L1.7 11.3H0.4Z"/><rect x="5.8" y="1.1" width="10.1" height="1.5"/><rect x="5.8" y="7" width="7" height="1.2"/><rect x="5.8" y="12.3" width="7" height="1.5"/></g></svg>
<div class="hline" style="left:0px;top:616px;width:806px"></div>
<div class="a t13" style="left:14px;top:636px">Messaging Indicator</div>
<div class="a t13" style="left:208px;top:636px">EHIER</div>
<svg class="a" style="left:346px;top:632px" width="17" height="17" viewBox="0 0 17 17"><g fill="#0572ce"><path d="M0 0.2H17L13.1 5.6H3.7Z"/><path d="M6.6 0L7.4 4.4M10.4 0L9.6 4.4" stroke="#f4f4f4" stroke-width="0.9"/><rect x="0.1" y="6.9" width="2.8" height="1.2"/><rect x="4.9" y="6.9" width="2.6" height="1.2"/><rect x="9.2" y="6.9" width="2.7" height="1.2"/><rect x="14.2" y="6.9" width="2.7" height="1.2"/><rect x="7.1" y="9.2" width="2.9" height="3.6"/><path d="M4.9 12.4H12.1L8.5 17Z"/></g></svg>
<svg class="a" style="left:410px;top:632px" width="18" height="15" viewBox="0 0 18 15"><g fill="#0572ce"><path d="M0 7.4L8.1 0V14.9Z"/><path d="M9.1 7.4L17.2 0V14.9Z"/></g></svg>
<svg class="a" style="left:485.5px;top:632px" width="12" height="16" viewBox="0 0 12 16"><g fill="#d4d5d7"><path d="M0 0H11.3V3.4H9.2V2.2H3.4L8.5 7.8L3.4 13.4H9.2V12.2H11.3V15.6H0V13.6L5.4 7.8L0 2Z"/></g></svg>
<svg class="a" style="left:578px;top:631px" width="18" height="18" viewBox="0 0 18 18"><g fill="#d4d5d7"><circle cx="9" cy="1.6" r="1.7"/><path d="M6 4.4H8.5L9 5.2L9.5 4.4H12V11.6H10.5V9.6H7.5V9.4H6Z"/><path d="M0.3 17.6L1.2 13.6Q2.6 10.6 6 10.4H10.6V12.1H6.6V12.9H11.8L16.4 9.6L17 10.2L13.8 15Q12.8 16.2 11 16.2H4.3L3.4 17.6Z"/></g></svg>
<svg class="a" style="left:653px;top:633px" width="17" height="14" viewBox="0 0 17 14"><g fill="#d4d5d7"><circle cx="3.3" cy="2.4" r="2.1"/><circle cx="8.6" cy="2.9" r="2.5"/><circle cx="14.1" cy="2.4" r="2.1"/><rect x="0.3" y="6" width="3.4" height="6.5" rx="1"/><path d="M5.2 6.8L8.65 8.6L12.1 6.8V13.7H5.2Z"/><rect x="13.6" y="6" width="3.3" height="6.5" rx="1"/></g></svg>
<svg class="a" style="left:744px;top:632px" width="16" height="16" viewBox="0 0 16 16"><g fill="#d4d5d7"><path d="M1.2 0.3H2.4V3.2H3.4V4.3H0.4V3.2H1.3V1.4L0.6 1.8Z"/><path d="M0.4 5.6H3.2V6.8L1.6 8.3H3.4V9.4H0.3V8.2L2 6.7H0.4Z"/><path d="M0.4 10.2H3.4V11.2L2.4 12.3Q3.5 12.6 3.5 14Q3.4 15.9 1.6 15.9H0.3V14.8H1.6Q2.2 14.8 2.2 14Q2.2 13.2 1.4 13.2H0.8V12.2L1.7 11.3H0.4Z"/><rect x="5.8" y="1.1" width="10.1" height="1.5"/><rect x="5.8" y="7" width="7" height="1.2"/><rect x="5.8" y="12.3" width="7" height="1.5"/></g></svg>
</div>

<!-- scrollbar -->
<div class="a" style="left:908px;top:43px;width:17px;height:647px;background:#f1f1f1"></div>
<div class="a" style="left:913px;top:51px;width:0;height:0;border-left:4px solid transparent;border-right:4px solid transparent;border-bottom:4px solid #a3a3a3"></div>
<div class="a" style="left:910px;top:61px;width:14px;height:380px;background:#c1c1c1"></div>
<div class="a" style="left:913px;top:678px;width:0;height:0;border-left:4px solid transparent;border-right:4px solid transparent;border-top:4px solid #505050"></div>

<!-- right panel -->
<div class="panel" style="left:942px;top:42px;width:944px;height:650px"></div>
<div class="sec" style="top:43px;border-top:none;height:46px"></div>
<div class="tri" style="left:957px;top:60px"></div>
<div class="a t14" style="left:988px;top:60px;font-size:14.45px">Filter Criteria</div>

<div class="a t13" style="left:957px;top:108px;color:#777">Match Type</div>
<div class="a" style="left:1036px;top:109px;width:16px;height:16px;border-radius:50%;background:#fff;border:1px solid #e6e6e6"></div>
<div class="a" style="left:1039px;top:112px;width:10px;height:10px;border-radius:50%;background:#0572ce"></div>
<div class="a t15" style="left:1062px;top:109px">Match All</div>
<div class="a" style="left:1129px;top:109px;width:16px;height:16px;border-radius:50%;background:#fff;border:1px solid #e6e6e6"></div>
<div class="a t15" style="left:1156px;top:109px">Match Any</div>
<div class="a" style="left:1298px;top:112px;font-size:13.3px;line-height:13px;font-style:italic;color:#22228e">'$' indicates variable</div>

<div class="a" style="left:959px;top:146px;width:910px;height:66px;border:1px solid #bcbcbc;border-top:none"></div>
<div class="a" style="left:959px;top:146px;width:9px;height:1px;background:#bcbcbc"></div>
<div class="a" style="left:1031px;top:146px;width:838px;height:1px;background:#bcbcbc"></div>
<div class="a t13" style="left:969px;top:140px">Conditions</div>

<div class="a t13" style="left:1009px;top:173px">Address Number</div>
<div class="a" style="left:1111px;top:170px;width:89px;height:19px;background:#fff;border:1px solid #a9a9a9;border-radius:2px"></div>
<div class="a t13" style="left:1116px;top:173px;color:#000">=</div>
<div class="a" style="left:1186px;top:176px;width:0;height:0;border-left:3px solid transparent;border-right:3px solid transparent;border-top:6px solid #000"></div>
<div class="inp" style="left:1204px;top:169px;width:173px;height:21px"></div>
<div class="a t13" style="left:1206px;top:173px;color:#000">${Address Number 1}</div>

<div class="sec" style="top:225px;height:46px"></div>
<div class="tri" style="left:957px;top:241px"></div>
<div class="a t14" style="left:988px;top:241px;font-size:14.45px">Return Fields and Variable Names</div>

<div class="a" style="left:979px;top:169px;width:17px;height:17px;background:#fff"></div><svg class="a" style="left:979px;top:169px" width="17" height="17" viewBox="0 0 17 17"><path d="M3 3L14 14M14 3L3 14" stroke="#0572ce" stroke-width="4.2" stroke-linecap="round"/></svg>
<div class="a" style="left:968px;top:294px;width:17px;height:17px;background:#fff"></div><svg class="a" style="left:968px;top:294px" width="17" height="17" viewBox="0 0 17 17"><path d="M3 3L14 14M14 3L3 14" stroke="#0572ce" stroke-width="4.2" stroke-linecap="round"/></svg>
<div class="a t13" style="left:999px;top:297px">Address Number</div>
<div class="inp" style="left:1123px;top:294px;width:172px;height:22px"></div>
<div class="a t13" style="left:1125px;top:298px;color:#000">AN8</div>
<div class="a" style="left:968px;top:336px;width:17px;height:17px;background:#fff"></div><svg class="a" style="left:968px;top:336px" width="17" height="17" viewBox="0 0 17 17"><path d="M3 3L14 14M14 3L3 14" stroke="#0572ce" stroke-width="4.2" stroke-linecap="round"/></svg>
<div class="a t13" style="left:999px;top:339px">Line ID</div>
<div class="inp" style="left:1123px;top:336px;width:172px;height:22px"></div>
<div class="a t13" style="left:1125px;top:340px;color:#000">LineId</div>
<div class="a" style="left:968px;top:378px;width:17px;height:17px;background:#fff"></div><svg class="a" style="left:968px;top:378px" width="17" height="17" viewBox="0 0 17 17"><path d="M3 3L14 14M14 3L3 14" stroke="#0572ce" stroke-width="4.2" stroke-linecap="round"/></svg>
<div class="a t13" style="left:999px;top:381px">Line Number</div>
<div class="inp" style="left:1123px;top:378px;width:172px;height:22px"></div>
<div class="a t13" style="left:1125px;top:382px;color:#000">LineNumber</div>
<div class="a" style="left:968px;top:420px;width:17px;height:17px;background:#fff"></div><svg class="a" style="left:968px;top:420px" width="17" height="17" viewBox="0 0 17 17"><path d="M3 3L14 14M14 3L3 14" stroke="#0572ce" stroke-width="4.2" stroke-linecap="round"/></svg>
<div class="a t13" style="left:999px;top:423px">Electronic Address</div>
<div class="inp" style="left:1123px;top:420px;width:172px;height:22px"></div>
<div class="a t13" style="left:1125px;top:424px;color:#000">Email</div>

<div class="sec" style="top:465px;height:46px"></div>
<div class="tri" style="left:957px;top:482px"></div>
<div class="a t14" style="left:988px;top:482px;font-size:14.45px">Order By</div>

</body></html>
